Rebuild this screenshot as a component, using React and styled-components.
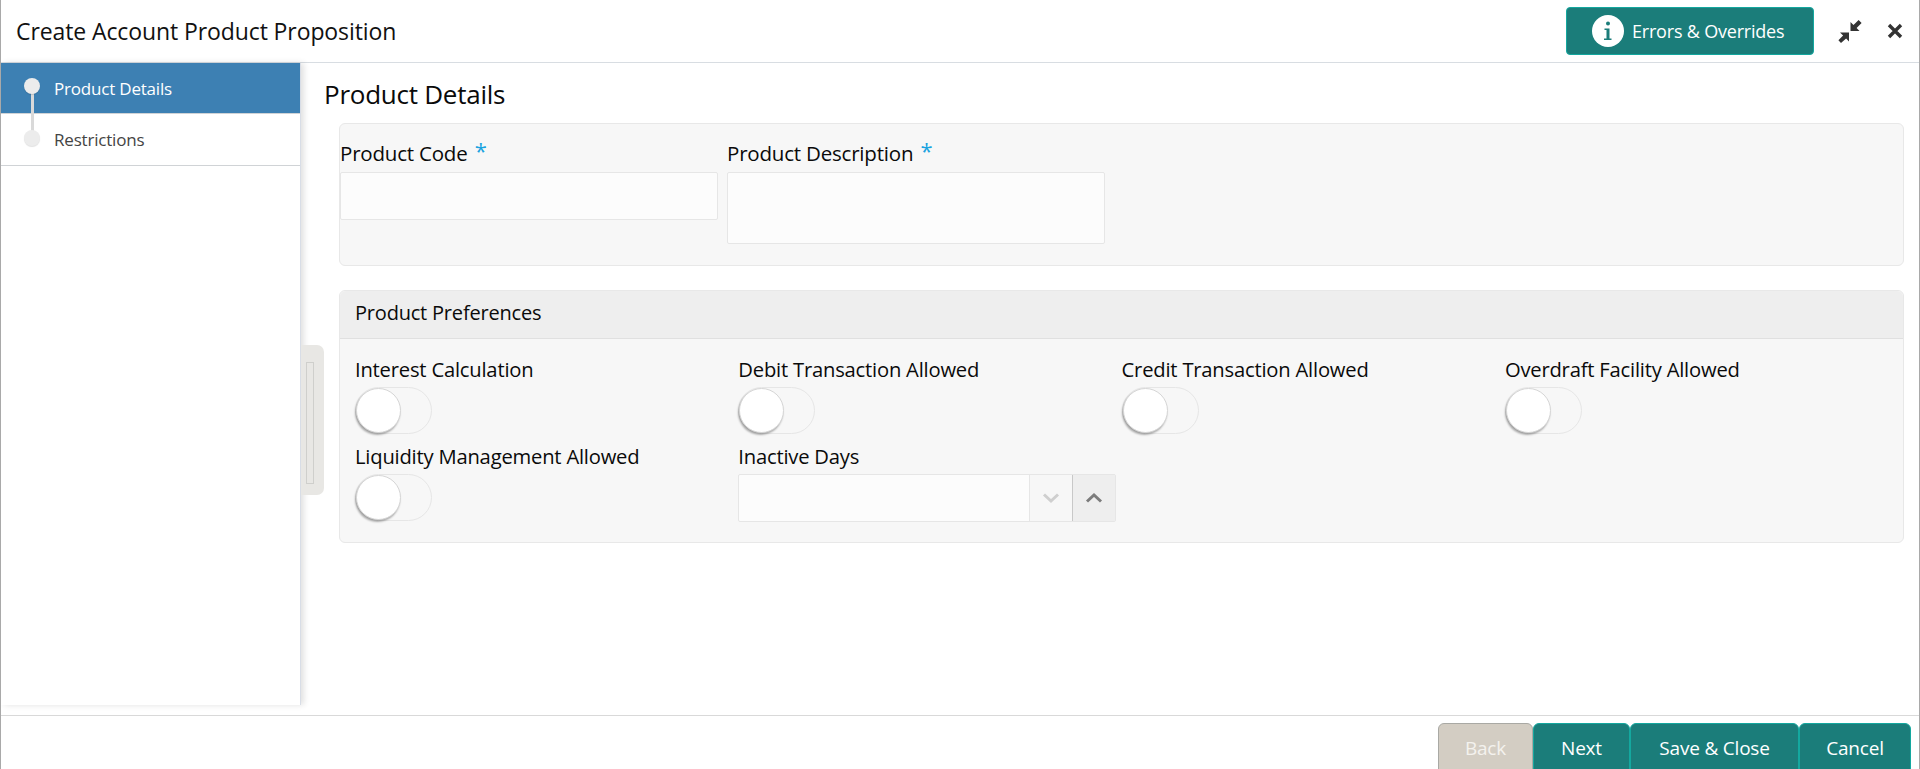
import React from "react";
import styled, { createGlobalStyle } from "styled-components";

const FONT = `"Open Sans", "Noto Sans", sans-serif`;

const prefs = [
  "Interest Calculation",
  "Debit Transaction Allowed",
  "Credit Transaction Allowed",
  "Overdraft Facility Allowed",
  "Liquidity Management Allowed",
];

const Toggle = () => (
  <ToggleTrack>
    <ToggleKnob />
  </ToggleTrack>
);

const App = () => {
  return (
    <>
      <GlobalStyle />
      <Page>
        <Header>
          <Title>Create Account Product Proposition</Title>
          <HeaderActions>
            <ErrorsButton>
              <InfoCircle>
                <svg width="20" height="24" viewBox="0 0 20 24">
                  <circle cx="10" cy="4.5" r="2" fill="#1b7d7a" />
                  <path
                    d="M6.5 9.5h5v10h2v1.5H6v-1.5h2.5v-8.5h-2z"
                    fill="#1b7d7a"
                  />
                </svg>
              </InfoCircle>
              Errors &amp; Overrides
            </ErrorsButton>
            <IconButton aria-label="Minimize">
              <svg width="24" height="24" viewBox="0 0 24 24" fill="#333">
                <path d="M12.5 3V12H21.5L18.6 9.1 23.6 3.9 20.6 1 15.5 6z" />
                <path d="M11 13.5V22.5L8.1 19.6 3 24 0.4 21.2 5.1 16.4 2 13.5z" />
              </svg>
            </IconButton>
            <IconButton aria-label="Close">
              <svg width="16" height="16" viewBox="0 0 16 16">
                <path
                  d="M2 2 14 14M14 2 2 14"
                  stroke="#333"
                  strokeWidth="3.4"
                  fill="none"
                />
              </svg>
            </IconButton>
          </HeaderActions>
        </Header>
        <Body>
          <Sidebar>
            <StepLine />
            <Step $active>
              <StepDot $active />
              Product Details
            </Step>
            <Step>
              <StepDot />
              Restrictions
            </Step>
          </Sidebar>
          <Handle>
            <HandleGrip />
          </Handle>
          <Content>
            <PageTitle>Product Details</PageTitle>
            <DetailsPanel>
              <Field>
                <FieldLabel>
                  Product Code <Required>*</Required>
                </FieldLabel>
                <TextBox />
              </Field>
              <Field>
                <FieldLabel>
                  Product Description <Required>*</Required>
                </FieldLabel>
                <TextBox $tall />
              </Field>
            </DetailsPanel>
            <PrefsPanel>
              <PrefsHeader>Product Preferences</PrefsHeader>
              <PrefsGrid>
                {prefs.map((label) => (
                  <Pref key={label}>
                    <PrefLabel>{label}</PrefLabel>
                    <Toggle />
                  </Pref>
                ))}
                <Pref>
                  <PrefLabel>Inactive Days</PrefLabel>
                  <Stepper>
                    <StepperInput />
                    <StepperDown>
                      <svg width="18" height="12" viewBox="0 0 18 12">
                        <path
                          d="M2 2.5 9 9 16 2.5"
                          stroke="#cfcfcf"
                          strokeWidth="3"
                          fill="none"
                        />
                      </svg>
                    </StepperDown>
                    <StepperUp>
                      <svg width="18" height="12" viewBox="0 0 18 12">
                        <path
                          d="M2 9.5 9 3 16 9.5"
                          stroke="#7c7c7c"
                          strokeWidth="3"
                          fill="none"
                        />
                      </svg>
                    </StepperUp>
                  </Stepper>
                </Pref>
              </PrefsGrid>
            </PrefsPanel>
          </Content>
        </Body>
        <Footer>
          <FooterButton $width="95px" $disabled>
            Back
          </FooterButton>
          <FooterButton $width="97px">Next</FooterButton>
          <FooterButton $width="169px">Save &amp; Close</FooterButton>
          <FooterButton $width="112px">Cancel</FooterButton>
        </Footer>
      </Page>
    </>
  );
};

export default App;

const GlobalStyle = createGlobalStyle`
  html, body {
    margin: 0;
    padding: 0;
    background: #fff;
    overflow: hidden;
  }
  * {
    box-sizing: border-box;
  }
`;

const Page = styled.div`
  display: flex;
  flex-direction: column;
  width: 1920px;
  height: 769px;
  border-left: 1px solid #a9a9a9;
  border-right: 1px solid #a9a9a9;
  font-family: ${FONT};
  color: #0a0a0a;
  overflow: hidden;
`;

const Header = styled.div`
  display: flex;
  align-items: center;
  justify-content: space-between;
  flex: 0 0 63px;
  padding: 0 0 0 15px;
  border-bottom: 1px solid #d8dde2;
`;

const Title = styled.div`
  font-size: 23px;
  letter-spacing: -0.1px;
  color: #111;
`;

const HeaderActions = styled.div`
  display: flex;
  align-items: center;
  padding-right: 16px;
`;

const ErrorsButton = styled.div`
  display: flex;
  align-items: center;
  width: 248px;
  height: 48px;
  margin-right: 24px;
  padding-left: 25px;
  background: #1b7d7a;
  border: 1px solid #14a89f;
  border-radius: 4px;
  color: #fff;
  font-size: 18px;
  letter-spacing: -0.2px;
`;

const InfoCircle = styled.div`
  display: flex;
  align-items: center;
  justify-content: center;
  width: 32px;
  height: 32px;
  margin-right: 8px;
  border-radius: 50%;
  background: #fff;
`;

const IconButton = styled.div`
  display: flex;
  align-items: center;
  justify-content: center;
  & + & {
    margin-left: 25px;
  }
`;

const Body = styled.div`
  position: relative;
  display: flex;
  flex: 0 0 642px;
`;

const Sidebar = styled.div`
  position: relative;
  flex: 0 0 300px;
  border-right: 1px solid #d8dde6;
  box-shadow: 3px 0 6px rgba(0, 0, 0, 0.12);
  z-index: 1;
`;

const StepLine = styled.div`
  position: absolute;
  top: 25px;
  left: 30px;
  width: 3px;
  height: 52px;
  background: #d9d9d9;
  z-index: 2;
`;

const Step = styled.div`
  display: flex;
  align-items: center;
  height: ${(p) => (p.$active ? "51px" : "52px")};
  padding-left: 23px;
  background: ${(p) => (p.$active ? "#3d80b3" : "#fff")};
  color: ${(p) => (p.$active ? "#fff" : "#444")};
  border-bottom: 1px solid #d0d3d6;
  font-size: 17px;
  letter-spacing: -0.2px;
`;

const StepDot = styled.span`
  position: relative;
  z-index: 3;
  flex: none;
  width: 16px;
  height: 16px;
  margin-right: 14px;
  margin-top: ${(p) => (p.$active ? "-5px" : "-3px")};
  border-radius: 50%;
  background: #ececec;
  box-shadow: 0 1px 1px rgba(0, 0, 0, 0.12);
`;

const Handle = styled.div`
  position: absolute;
  top: 282px;
  left: 300px;
  width: 23px;
  height: 150px;
  padding: 17px 0 0 5px;
  background: #e8e7e4;
  border-radius: 0 7px 7px 0;
  z-index: 2;
`;

const HandleGrip = styled.div`
  width: 8px;
  height: 122px;
  border: 1px solid #cfcfcc;
`;

const Content = styled.div`
  flex: 1;
  padding: 13px 15px 0 23px;
`;

const PageTitle = styled.div`
  font-size: 26px;
  line-height: 36px;
  letter-spacing: -0.25px;
  margin-bottom: 11px;
`;

const Panel = styled.div`
  margin-left: 15px;
  background: #f7f7f7;
  border: 1px solid #e8e8e8;
  border-radius: 6px;
`;

const DetailsPanel = styled(Panel)`
  display: flex;
  gap: 9px;
  height: 143px;
  margin-bottom: 24px;
`;

const Field = styled.div`
  width: 378px;
`;

const FieldLabel = styled.div`
  height: 48px;
  padding-top: 16px;
  font-size: 20.5px;
  line-height: 26px;
  letter-spacing: -0.2px;
  white-space: nowrap;
`;

const Required = styled.span`
  margin-left: 2px;
  color: #1aa3e0;
  font-size: 22px;
  line-height: 20px;
  vertical-align: 2px;
`;

const TextBox = styled.div`
  width: 100%;
  height: ${(p) => (p.$tall ? "72px" : "48px")};
  background: #fcfcfc;
  border: 1px solid #e6e6e6;
  border-radius: 2px;
`;

const PrefsPanel = styled(Panel)`
  height: 253px;
`;

const PrefsHeader = styled.div`
  display: flex;
  align-items: center;
  height: 48px;
  padding: 0 0 4px 15px;
  background: #eeeeee;
  border-bottom: 1px solid #e0e0e0;
  border-radius: 6px 6px 0 0;
  font-size: 20px;
  letter-spacing: -0.2px;
`;

const PrefsGrid = styled.div`
  display: grid;
  grid-template-columns: repeat(4, 383.3px);
  grid-auto-rows: 87px;
  padding: 15px 0 0 15px;
`;

const Pref = styled.div`
  display: flex;
  flex-direction: column;
  align-items: flex-start;
`;

const PrefLabel = styled.div`
  height: 31px;
  font-size: 20.2px;
  line-height: 30px;
  letter-spacing: -0.2px;
  white-space: nowrap;
`;

const ToggleTrack = styled.div`
  position: relative;
  width: 77px;
  height: 47px;
  margin-top: 2px;
  border: 1px solid #e6e6e6;
  border-radius: 24px;
`;

const ToggleKnob = styled.div`
  position: absolute;
  top: 0;
  left: 0;
  width: 45px;
  height: 45px;
  background: #fff;
  border: 1px solid #d6d6d6;
  border-radius: 50%;
  box-shadow: -1px 2px 2px rgba(0, 0, 0, 0.3);
`;

const Stepper = styled.div`
  display: flex;
  width: 378px;
  height: 48px;
  margin-top: 2px;
  background: #fcfcfc;
  border: 1px solid #e6e6e6;
  border-radius: 2px;
`;

const StepperInput = styled.div`
  flex: 1;
`;

const StepperButton = styled.div`
  display: flex;
  align-items: center;
  justify-content: center;
  width: 43px;
`;

const StepperDown = styled(StepperButton)`
  background: #f7f7f7;
  border-left: 1px solid #e6e6e6;
`;

const StepperUp = styled(StepperButton)`
  background: #eeeeee;
  border-left: 1px solid #c8c8c8;
`;

const Footer = styled.div`
  display: flex;
  align-items: flex-start;
  justify-content: flex-end;
  flex: 1;
  padding: 7px 8px 0 0;
  margin-top: 10px;
  border-top: 1px solid #d9d9d9;
`;

const FooterButton = styled.div`
  display: flex;
  align-items: center;
  justify-content: center;
  width: ${(p) => p.$width};
  height: 50px;
  background: ${(p) => (p.$disabled ? "#d3cdc3" : "#1b7d7a")};
  border: 1px solid ${(p) => (p.$disabled ? "#a9a9a4" : "#14a89f")};
  border-radius: 6px 6px 0 0;
  color: ${(p) => (p.$disabled ? "#f4f2ee" : "#fff")};
  font-size: 19px;
  letter-spacing: -0.2px;
`;
